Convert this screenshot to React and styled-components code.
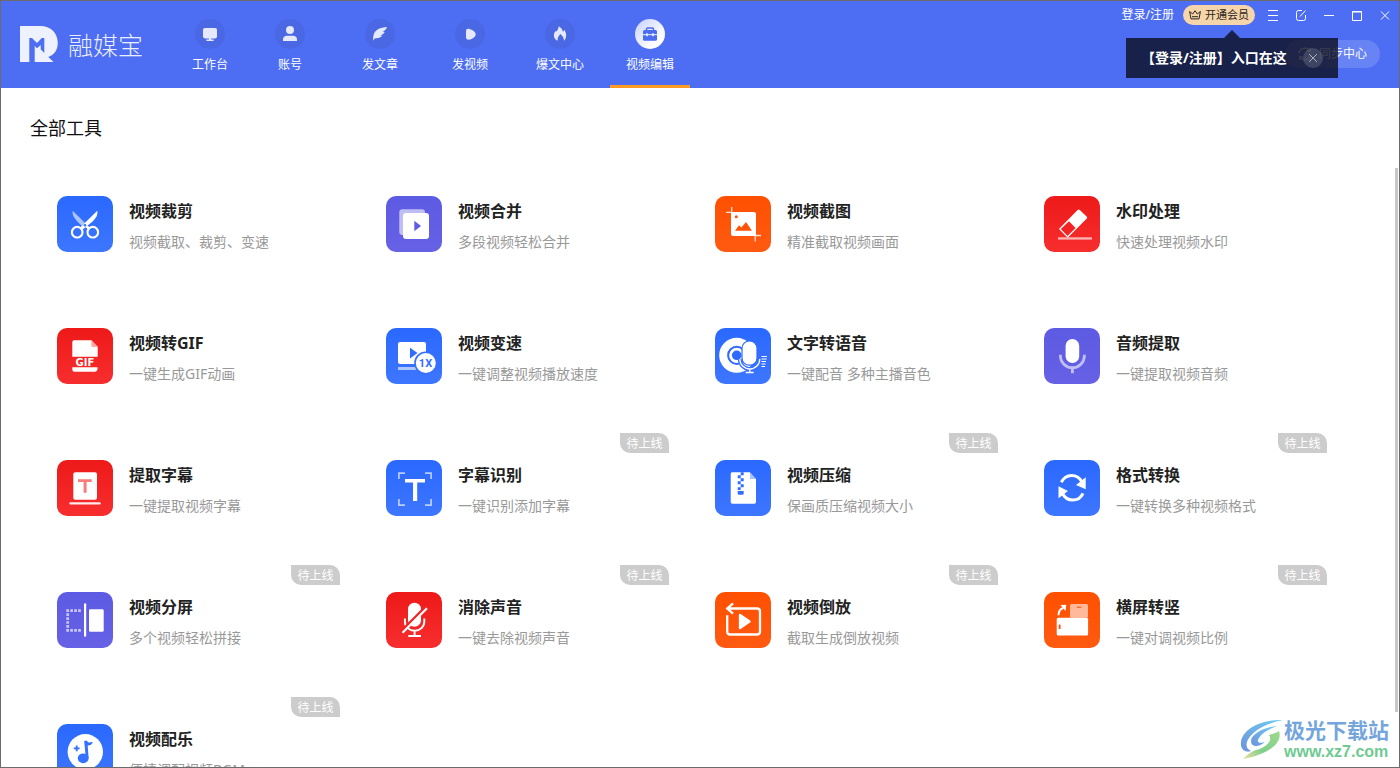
import React, { useEffect, useRef, useState } from "react";
import styled, { createGlobalStyle } from "styled-components";

const Global = createGlobalStyle`
  * { box-sizing: border-box; }
  html, body { margin: 0; padding: 0; }
  body {
    font-family: "Noto Sans", "Noto Sans CJK SC", sans-serif;
    background: #fff;
    color: #222;
  }
  button { font: inherit; border: 0; padding: 0; background: none; cursor: pointer; }
  a { color: inherit; text-decoration: none; }
  svg { display: block; flex: none; }
`;

const Window = styled.div`
  display: flex;
  flex-direction: column;
  height: 100vh;
  border: 1px solid #6b6b6b;
  overflow: hidden;
  position: relative;
`;

const Header = styled.header`
  display: flex;
  flex: none;
  height: 87px;
  padding-left: 19px;
  background: #4d6ef2;
  color: #fff;
`;

const Brand = styled.a`
  display: flex;
  align-items: center;
  gap: 10px;
  margin-right: 27px;
  padding-bottom: 2px;
`;

const BrandName = styled.span`
  font-family: "Noto Sans CJK SC", sans-serif;
  font-size: 25px;
  font-weight: 300;
  line-height: 30px;
  color: #e9edfe;
`;

const Nav = styled.nav`
  display: flex;
`;

const NavLink = styled.a`
  display: flex;
  flex-direction: column;
  align-items: center;
  width: 80px;
  margin-left: ${(p) => (p.$spaced ? "10px" : "0")};
  padding-top: 18px;
  font-size: 12px;
  line-height: 32px;
`;

const NavIcon = styled.span`
  display: block;
  width: 30px;
  height: 30px;
  border-radius: 50%;
  color: ${(p) => (p.$active ? "#4a6cf0" : "#e4e9fd")};
  background: ${(p) => (p.$active ? "linear-gradient(135deg, #c6d0fb, #fff 75%)" : "#4a67e4")};
`;

const ActiveBar = styled.span`
  width: 80px;
  height: 3px;
  margin-top: auto;
  background: #ff9a25;
`;

const HeaderRight = styled.div`
  display: flex;
  flex-direction: column;
  align-items: flex-end;
  gap: 11px;
  margin-left: auto;
`;

const TopRow = styled.div`
  display: flex;
  align-items: center;
  height: 28px;
`;

const LoginLink = styled.a`
  margin-right: 9px;
  font-size: 12px;
  line-height: 20px;
`;

const VipArea = styled.div`
  position: relative;
  margin-right: 4px;
`;

const VipButton = styled.button`
  display: flex;
  align-items: center;
  justify-content: center;
  gap: 4px;
  width: 72px;
  height: 20px;
  border-radius: 10px;
  background: #f6d5aa;
  color: #2c2620;
  font-size: 11px;
  line-height: 20px;
`;

const WindowButton = styled.button`
  display: flex;
  align-items: center;
  justify-content: center;
  width: 28px;
  height: 28px;
  color: #fff;
`;

const SyncButton = styled.button`
  display: flex;
  align-items: center;
  justify-content: center;
  gap: 7px;
  width: 95px;
  height: 28px;
  margin-right: 19px;
  border-radius: 14px;
  background: #6883f4;
  color: #fff;
  font-size: 12px;
  line-height: 28px;
`;

const Tip = styled.div`
  position: absolute;
  top: 33px;
  left: -57px;
  display: flex;
  align-items: center;
  gap: 16px;
  width: 212px;
  height: 40px;
  padding-left: 15px;
  background: rgba(11, 14, 30, 0.8);
  color: #fff;
  font-size: 14px;
  font-weight: 700;
  line-height: 40px;
  white-space: nowrap;

  &::before {
    content: "";
    position: absolute;
    top: -8px;
    left: 98px;
    border: 8px solid transparent;
    border-top-width: 0;
    border-bottom-color: rgba(11, 14, 30, 0.8);
  }
`;

const TipClose = styled.button`
  display: flex;
  align-items: center;
  justify-content: center;
  width: 20px;
  height: 20px;
  border-radius: 50%;
  background: rgba(120, 128, 150, 0.35);
  color: #a9aebd;
`;

const PageTitle = styled.h1`
  flex: none;
  margin: 0;
  padding-left: 29px;
  color: #111;
  font-size: 18px;
  font-weight: 400;
  line-height: 80px;
`;

const Content = styled.main`
  display: flex;
  flex: 1;
  min-height: 0;
`;

const ScrollArea = styled.div`
  flex: 1;
  overflow-y: auto;
  scrollbar-width: none;
  padding: 1px 68px 20px 29px;
`;

const ScrollTrack = styled.div`
  flex: none;
  width: 4px;
  padding-right: 1px;
`;

const ScrollThumb = styled.div`
  background: #c8c8c8;
`;

const ToolGrid = styled.ul`
  display: grid;
  grid-template-columns: repeat(4, 1fr);
  gap: 22px 19px;
  margin: 0;
  padding: 0;
  list-style: none;
`;

const ToolCard = styled.a`
  position: relative;
  display: flex;
  align-items: flex-start;
  gap: 16px;
  height: 110px;
  padding: 27px;
`;

const tileColors = {
  blue: "linear-gradient(#2a68ff, #3d76ff)",
  purple: "linear-gradient(#5d5be3, #6661e5)",
  orange: "linear-gradient(#ff5000, #ff5a12)",
  red: "linear-gradient(#ee1919, #f72e2e)",
};

const Tile = styled.span`
  flex: none;
  width: 56px;
  height: 56px;
  border-radius: 10px;
  background: ${(p) => tileColors[p.$tone]};
`;

const ToolText = styled.div`
  white-space: nowrap;
`;

const ToolName = styled.h2`
  margin: 0;
  color: #222;
  font-size: 16px;
  font-weight: 700;
  line-height: 30px;
`;

const ToolDesc = styled.p`
  margin: 0;
  color: #999;
  font-size: 14px;
  line-height: 32px;
`;

const Badge = styled.span`
  position: absolute;
  top: 0;
  right: 0;
  width: 49px;
  height: 20px;
  border-radius: 0 10px 0 10px;
  background: #ccc;
  color: #fff;
  font-size: 12px;
  line-height: 22px;
  text-align: center;
`;

const Watermark = styled.div`
  position: absolute;
  right: 10px;
  bottom: 6px;
  display: flex;
  align-items: center;
`;

const WatermarkText = styled.div`
  display: flex;
  flex-direction: column;
`;

const WatermarkName = styled.span`
  color: #74a5dc;
  font-size: 21px;
  font-weight: 700;
  line-height: 26px;
`;

const WatermarkUrl = styled.span`
  color: #6fca92;
  font-family: "Liberation Sans", sans-serif;
  font-size: 16px;
  font-weight: 700;
  line-height: 18px;
`;

const navIcons = {
  desk: (
    <g fill="currentColor">
      <rect x="8" y="9" width="14" height="10.4" rx="1.8" />
      <path d="M14 19h2v1.6h2.6V22h-7.2v-1.4H14z" />
    </g>
  ),
  user: (
    <g fill="currentColor">
      <circle cx="15" cy="11" r="4" />
      <path d="M8 22v-1.6C8 18 9.6 16.7 12 16.7h6c2.4 0 4 1.300 4 3.700V22z" />
    </g>
  ),
  feather: (
    <path
      fill="currentColor"
      d="M22 8C15.500 8.300 9.200 10.800 8.300 17.200L8 21.800C9.200 19.800 10 19.200 11.600 19.200 14 19.200 15.800 18.400 17.300 16.800L15.200 16.500C17.300 15.700 18.900 14.500 19.700 12.900L17.700 12.700C20 11.700 21.400 10.200 22 8z"
    />
  ),
  video: (
    <path
      fill="currentColor"
      d="M11 12.200C11 10 12.300 9.300 14.600 9.900 18 10.800 20.700 13 20.700 15.200 20.700 17.400 18 19.600 14.800 20.600 12.400 21.200 11 20.400 11 18z"
    />
  ),
  flame: (
    <path
      fill="currentColor"
      d="M13.700 7.300C17 9.200 17.600 10.800 17.900 13L19.300 10.900C21.400 13.200 22.300 18.400 19 21.700 19 18.700 17.600 17.200 15.300 15 13.600 17 12.400 18.600 12.600 21.800 8.500 20 8.300 16 9.700 13.300 10.200 12.300 10.600 12 11.200 12.600 12.800 11.400 13.400 9.700 13.700 7.300z"
    />
  ),
  toolbox: (
    <g>
      <path d="M11.500 12V10Q11.500 9 12.500 9h5q1 0 1 1v2" fill="none" stroke="currentColor" strokeWidth="1.500" />
      <rect x="8" y="11" width="14" height="10.800" rx="1.500" fill="currentColor" />
      <path d="M8 15.700h14" stroke="#f1f3fe" strokeWidth="1" />
      <path d="M12 14.200v3M18 14.200v3" stroke="#f1f3fe" strokeWidth="1.600" />
    </g>
  ),
};

const toolIcons = {
  cut: (
    <g>
      <path d="M15.700 14.700C14.800 19.500 18 23.600 24.700 29.800L28 27z" fill="#fff" opacity=".6" />
      <path d="M40.300 14.700C41.200 20 37.700 23.700 32.500 28L25.600 33.500 23.700 31z" fill="#fff" />
      <path d="M28 29l4.500 4" stroke="#fff" strokeWidth="2.400" />
      <circle cx="20.200" cy="36.200" r="5.300" fill="none" stroke="#fff" strokeWidth="2.100" />
      <circle cx="35.800" cy="36.200" r="5.300" fill="none" stroke="#fff" strokeWidth="2.100" />
      <circle cx="28" cy="29.300" r="1.300" fill="#3570ff" />
    </g>
  ),
  gif: (
    <g fill="#fff">
      <path d="M17 12.300H34.700V18.500H40.700V28.700H15.300V14Q15.300 12.300 17 12.300z" />
      <path d="M34.700 12.300L40.700 18.500H34.700z" opacity=".6" />
      <text x="28" y="38" fontFamily="DejaVu Sans, sans-serif" fontSize="10" fontWeight="700" textAnchor="middle">
        GIF
      </text>
      <path d="M15.300 39.200H40.700C40.600 42.500 39.800 43.700 37.500 43.700H17.500Q15.300 43.700 15.300 41.500z" />
    </g>
  ),
  merge: (
    <g>
      <rect x="13.300" y="13.300" width="25.700" height="25.700" rx="3" fill="#fff" opacity=".6" />
      <rect x="17" y="17" width="26" height="26" rx="3" fill="#fff" />
      <path d="M28.300 24.700L35 30 28.300 35.300z" fill="#5d5be3" />
    </g>
  ),
  speed: (
    <g>
      <rect x="12" y="14" width="28" height="22" rx="2" fill="#fff" />
      <path d="M24 19.700L31.500 25 24 30.400z" fill="#2f6cff" />
      <rect x="12" y="39" width="19" height="3" fill="#fff" opacity=".6" />
      <circle cx="39.800" cy="35" r="11.600" fill="#3570ff" />
      <circle cx="39.800" cy="35" r="10" fill="#fff" />
      <text x="39.500" y="39" fill="#3570ff" fontFamily="Roboto, sans-serif" fontSize="11" fontWeight="700" textAnchor="middle">
        1X
      </text>
    </g>
  ),
  shot: (
    <g>
      <path d="M16.700 11v6M11 16.300h6M40.200 39.500v6M40 39.500h6" stroke="#fff" strokeWidth="1.300" opacity=".8" />
      <path d="M16 16h23q2 0 2 2v22H18q-2 0-2-2z" fill="#fff" />
      <path d="M20 34.700L24 29.300 26.300 31.500 31 26 37 34.700z" fill="#ff5308" />
      <circle cx="21.300" cy="20.700" r="1.500" fill="#ff5308" />
    </g>
  ),
  erase: (
    <g>
      <path d="M33.600 14.100Q34.700 13.100 35.800 14.100L42.800 20.800Q43.600 21.700 42.800 22.600L23.700 41.700 15 33z" fill="#fff" />
      <path d="M25 25.300L31.600 32 23.500 39.900 16.800 33z" fill="#f32323" />
      <rect x="14" y="41.300" width="34" height="2.300" fill="#fff" opacity=".65" />
    </g>
  ),
  speech: (
    <g>
      <circle cx="21.700" cy="27.300" r="17.500" fill="#fff" />
      <circle cx="21.700" cy="27.300" r="8.600" fill="none" stroke="#3069ff" strokeWidth="2" />
      <circle cx="21.700" cy="27.300" r="4.800" fill="#3069ff" />
      <path d="M24.800 31A10 10 0 0 0 45 31" fill="none" stroke="#3570ff" strokeWidth="4" />
      <rect x="27" y="13" width="15" height="24.200" rx="7.300" fill="#fff" stroke="#3069ff" strokeWidth="1.200" />
      <path d="M24.800 31A10 10 0 0 0 44.800 31M34.800 40.500v4M30.700 44.500h8" fill="none" stroke="#fff" strokeWidth="1.300" />
      <path d="M46.500 28.500h5.500M46.500 31h5.300M46.500 33.500h4.500M46.500 36h4M46.500 38.500h3.600" stroke="#fff" strokeWidth="1.100" />
    </g>
  ),
  mic: (
    <g>
      <rect x="21.600" y="11" width="13.600" height="24" rx="6.800" fill="#fff" />
      <path d="M16.400 26.700V27.700A12 12 0 0 0 40.400 27.700V26.700M28.400 39.700v5.600" fill="none" stroke="#fff" strokeWidth="2.800" opacity=".6" />
    </g>
  ),
  extract: (
    <g>
      <rect x="16.300" y="12.300" width="23.700" height="27.400" rx="2" fill="#fff" />
      <path d="M21 19.300H34.700V22H29.600V32.700H26.600V22H21z" fill="#f97b7b" />
      <rect x="12.300" y="42.300" width="31.400" height="2.300" rx="1" fill="#fff" opacity=".9" />
    </g>
  ),
  recognise: (
    <g>
      <path d="M12.900 19V13.200H19M39 13.200h6.100V19M45.100 39v6.100H39M19 45.100h-6.100V39" fill="none" stroke="#fff" strokeWidth="1.700" opacity=".65" />
      <path d="M19 19H39V22.600H31.200V41H27V22.600H19z" fill="#fff" />
    </g>
  ),
  zip: (
    <g>
      <path d="M17 12.300H35V18.700H41V42Q41 43.700 39.300 43.700H17.400Q15.700 43.700 15.700 42V14Q15.700 12.300 17 12.300z" fill="#fff" />
      <path d="M35 12.300L41 18.700H35z" fill="#fff" opacity=".6" />
      <path d="M25.700 12.300h3v3h-3zM22.700 15.300h3v3h-3zM25.700 18.300h3v3h-3zM22.700 21.300h3v3h-3zM25.700 24.300h3v3h-3zM22.700 27.300h3v2.600h-3zM22.700 31h6v2.500q0 1.300-1.300 1.300h-3.400q-1.300 0-1.300-1.300z" fill="#326eff" />
    </g>
  ),
  convert: (
    <g fill="#fff">
      <path d="M17.300 22.200C22 13.200 33 13.400 37.800 21.600M39 33.300C34.800 42.300 22.800 42.200 18.500 33.500" fill="none" stroke="#fff" strokeWidth="3" />
      <path d="M41.700 17.300V29.300L32 25zM14.500 26.300V38.300L24 31z" />
    </g>
  ),
  split: (
    <g fill="#fff">
      <path
        d="M9.300 18.700H25M9.300 38.300H25"
        stroke="#fff"
        strokeWidth="2.700"
        strokeDasharray="2.700 1.250"
        opacity=".65"
      />
      <path d="M10.700 21.250V37" stroke="#fff" strokeWidth="2.700" strokeDasharray="2.700 1.250" opacity=".65" />
      <rect x="27" y="11.300" width="2.200" height="33.400" rx="1" />
      <rect x="32" y="17.300" width="14.700" height="22.400" rx="1.300" />
    </g>
  ),
  mute: (
    <g>
      <rect x="22" y="10.700" width="13" height="24" rx="6.500" fill="#fff" />
      <path d="M18.900 26.500V29.500A9.700 9.300 0 0 0 38.300 29.500V26.500M28.600 38.800V44M22.300 44H35" fill="none" stroke="#fff" strokeWidth="1.900" />
      <path d="M15 39.300L40 14.300" stroke="#f32323" strokeWidth="2.500" />
      <path d="M16.500 40.700L41 16.200" stroke="#fff" strokeWidth="2.200" />
    </g>
  ),
  reverse: (
    <g fill="none" stroke="#fff" strokeWidth="2.300">
      <path d="M12 16.500H42Q45 16.500 45 19.500V39.500Q45 42.500 42 42.500H15Q12.200 42.500 12.200 39.500V23.300M18 11.300L12.300 16.500 18 21.700" />
      <path d="M25 23L34.500 29.500 25 36z" fill="#fff" strokeLinejoin="round" />
    </g>
  ),
  rotate: (
    <g>
      <rect x="26" y="12" width="18" height="13.700" rx="1.500" fill="#fff" opacity=".6" />
      <path d="M33 15.200h4.300" stroke="#ff5308" strokeWidth="1.200" />
      <rect x="12.700" y="25.700" width="31.400" height="17.700" rx="1.500" fill="#fff" />
      <rect x="14.700" y="32.500" width="1.900" height="4.500" rx=".6" fill="#ff5308" />
      <path d="M14.500 23.200Q14.500 17.300 19.500 16" fill="none" stroke="#fff" strokeWidth="2" />
      <path d="M16.500 13L22.300 12.700 21.500 19z" fill="#fff" />
    </g>
  ),
  music: (
    <g>
      <circle cx="28.300" cy="27.800" r="17.700" fill="#fff" />
      <ellipse cx="26.200" cy="34.300" rx="5.400" ry="4.900" fill="#3570ff" />
      <path d="M27.200 17L29.500 16.600 31.500 18.500Q34 18.300 36 18 34.500 21.600 30.700 21.600L31.600 34H28.800z" fill="#3570ff" />
      <path d="M19.700 21.500v5.800M16.800 24.400h5.800" stroke="#3570ff" strokeWidth="1.900" />
    </g>
  ),
};

const navItems = [
  { label: "工作台", icon: "desk" },
  { label: "账号", icon: "user" },
  { label: "发文章", icon: "feather", spaced: true },
  { label: "发视频", icon: "video", spaced: true },
  { label: "爆文中心", icon: "flame", spaced: true },
  { label: "视频编辑", icon: "toolbox", spaced: true, active: true },
];

const tools = [
  { name: "视频裁剪", desc: "视频截取、裁剪、变速", icon: "cut", tone: "blue" },
  { name: "视频合并", desc: "多段视频轻松合并", icon: "merge", tone: "purple" },
  { name: "视频截图", desc: "精准截取视频画面", icon: "shot", tone: "orange" },
  { name: "水印处理", desc: "快速处理视频水印", icon: "erase", tone: "red" },
  { name: "视频转GIF", desc: "一键生成GIF动画", icon: "gif", tone: "red" },
  { name: "视频变速", desc: "一键调整视频播放速度", icon: "speed", tone: "blue" },
  { name: "文字转语音", desc: "一键配音 多种主播音色", icon: "speech", tone: "blue" },
  { name: "音频提取", desc: "一键提取视频音频", icon: "mic", tone: "purple" },
  { name: "提取字幕", desc: "一键提取视频字幕", icon: "extract", tone: "red" },
  { name: "字幕识别", desc: "一键识别添加字幕", icon: "recognise", tone: "blue", soon: true },
  { name: "视频压缩", desc: "保画质压缩视频大小", icon: "zip", tone: "blue", soon: true },
  { name: "格式转换", desc: "一键转换多种视频格式", icon: "convert", tone: "blue", soon: true },
  { name: "视频分屏", desc: "多个视频轻松拼接", icon: "split", tone: "purple", soon: true },
  { name: "消除声音", desc: "一键去除视频声音", icon: "mute", tone: "red", soon: true },
  { name: "视频倒放", desc: "截取生成倒放视频", icon: "reverse", tone: "orange", soon: true },
  { name: "横屏转竖", desc: "一键对调视频比例", icon: "rotate", tone: "orange", soon: true },
  { name: "视频配乐", desc: "便捷调配视频BGM", icon: "music", tone: "blue", soon: true },
];

const windowControls = [
  { label: "菜单", path: "M2 2.500h10M2 7.500h10M2 12.500h10" },
  { label: "反馈", path: "M8 2.500H4.500Q2.500 2.500 2.500 4.500V10.500Q2.500 12.500 4.500 12.500H9.500Q11.500 12.500 11.500 10.500V7M6 8.500L11.500 2.500" },
  { label: "最小化", path: "M2 7.500h10" },
  { label: "最大化", path: "M2.500 3.500h9v9h-9zM2.500 4h9" },
  { label: "关闭", path: "M3 3.500l8 8M11 3.500l-8 8" },
];

function BrandMark() {
  return (
    <svg width="38" height="36" viewBox="0 0 38 36" aria-hidden="true">
      <path fill="#eef1fe" d="M0 0H20C31 0 37.800 7 37.800 17 37.800 24 34 29 28.300 31L33.500 36H0z" />
      <path fill="#4d6ef2" d="M9.300 36V12H12L17 17 21.800 12H24.300V27L20.700 23.300V19L17 22.300 14.700 20V36z" />
    </svg>
  );
}

function WatermarkMark() {
  return (
    <svg width="44" height="42" viewBox="0 0 44 42" aria-hidden="true">
      <defs>
        <linearGradient id="wm-blue" x1="0" y1="1" x2="1" y2="0">
          <stop offset="0" stopColor="#6d93dc" />
          <stop offset="1" stopColor="#6fcdf3" />
        </linearGradient>
        <linearGradient id="wm-green" x1="0" y1="1" x2="1" y2="0">
          <stop offset="0" stopColor="#f3dd9a" />
          <stop offset=".4" stopColor="#7fd08d" />
          <stop offset="1" stopColor="#9ed98a" />
        </linearGradient>
      </defs>
      <path fill="url(#wm-blue)" d="M43 2C25 1 3 9 1 24 0 31 5 35 11 33 6 31 5 26 9 20 15 11 28 5 43 2z" />
      <path fill="url(#wm-blue)" d="M37 8C24 9 11 16 11 23 11 29 18 30 25 24 19 26 16 24 19 20 22 15 29 11 37 8z" />
      <path fill="url(#wm-green)" d="M39 13C43 24 30 36 3 41 8 36 11 34 16 32 27 29 33 22 29 17 32 16 36 15 39 13z" />
    </svg>
  );
}

export default function App() {
  const areaRef = useRef(null);
  const [thumb, setThumb] = useState({ top: 0, height: 0 });
  const [tipOpen, setTipOpen] = useState(true);

  const measure = () => {
    const el = areaRef.current;
    if (!el) return;
    const ratio = el.clientHeight / el.scrollHeight;
    setThumb({
      height: ratio < 1 ? Math.round(el.clientHeight * ratio) : 0,
      top: Math.round(el.scrollTop * ratio),
    });
  };

  useEffect(() => {
    measure();
    window.addEventListener("resize", measure);
    return () => window.removeEventListener("resize", measure);
  }, []);

  return (
    <>
      <Global />
      <Window>
        <Header>
          <Brand href="#home">
            <BrandMark />
            <BrandName>融媒宝</BrandName>
          </Brand>
          <Nav>
            {navItems.map((item) => (
              <NavLink key={item.label} href={`#${item.icon}`} $spaced={item.spaced}>
                <NavIcon $active={item.active}>
                  <svg width="30" height="30" viewBox="0 0 30 30" aria-hidden="true">
                    {navIcons[item.icon]}
                  </svg>
                </NavIcon>
                {item.label}
                {item.active && <ActiveBar />}
              </NavLink>
            ))}
          </Nav>
          <HeaderRight>
            <TopRow>
              <LoginLink href="#login">登录/注册</LoginLink>
              <VipArea>
                <VipButton type="button">
                  <svg width="12" height="12" viewBox="0 0 12 12" fill="none" stroke="currentColor" aria-hidden="true">
                    <path d="M.600 2.500L2 9.900H10L11.400 2.500 8.300 5 6 1.700 3.700 5zM3 7.700h6" />
                  </svg>
                  开通会员
                </VipButton>
                {tipOpen && (
                  <Tip>
                    【登录/注册】入口在这
                    <TipClose type="button" aria-label="关闭提示" onClick={() => setTipOpen(false)}>
                      <svg width="10" height="10" viewBox="0 0 10 10" stroke="currentColor" aria-hidden="true">
                        <path d="M1 1l8 8M9 1L1 9" />
                      </svg>
                    </TipClose>
                  </Tip>
                )}
              </VipArea>
              {windowControls.map((c) => (
                <WindowButton key={c.label} type="button" aria-label={c.label}>
                  <svg width="14" height="14" viewBox="0 0 14 14" fill="none" stroke="currentColor" aria-hidden="true">
                    <path d={c.path} />
                  </svg>
                </WindowButton>
              ))}
            </TopRow>
            <SyncButton type="button">
              <svg width="14" height="14" viewBox="0 0 14 14" fill="none" stroke="currentColor" strokeWidth="1.300" aria-hidden="true">
                <path d="M1 6.500A6 6 0 0 1 12 4M13 7.500A6 6 0 0 1 2 10M12.300 1v3.200H9M1.700 13V9.800H5" />
              </svg>
              同步中心
            </SyncButton>
          </HeaderRight>
        </Header>
        <PageTitle>全部工具</PageTitle>
        <Content>
          <ScrollArea ref={areaRef} onScroll={measure}>
            <ToolGrid>
              {tools.map((tool) => (
                <li key={tool.name}>
                  <ToolCard href={`#${tool.icon}`}>
                    <Tile $tone={tool.tone}>
                      <svg width="56" height="56" viewBox="0 0 56 56" aria-hidden="true">
                        {toolIcons[tool.icon]}
                      </svg>
                    </Tile>
                    <ToolText>
                      <ToolName>{tool.name}</ToolName>
                      <ToolDesc>{tool.desc}</ToolDesc>
                    </ToolText>
                    {tool.soon && <Badge>待上线</Badge>}
                  </ToolCard>
                </li>
              ))}
            </ToolGrid>
          </ScrollArea>
          <ScrollTrack>
            <ScrollThumb style={{ height: thumb.height, marginTop: thumb.top }} />
          </ScrollTrack>
        </Content>
        <Watermark>
          <WatermarkMark />
          <WatermarkText>
            <WatermarkName>极光下载站</WatermarkName>
            <WatermarkUrl>www.xz7.com</WatermarkUrl>
          </WatermarkText>
        </Watermark>
      </Window>
    </>
  );
}
